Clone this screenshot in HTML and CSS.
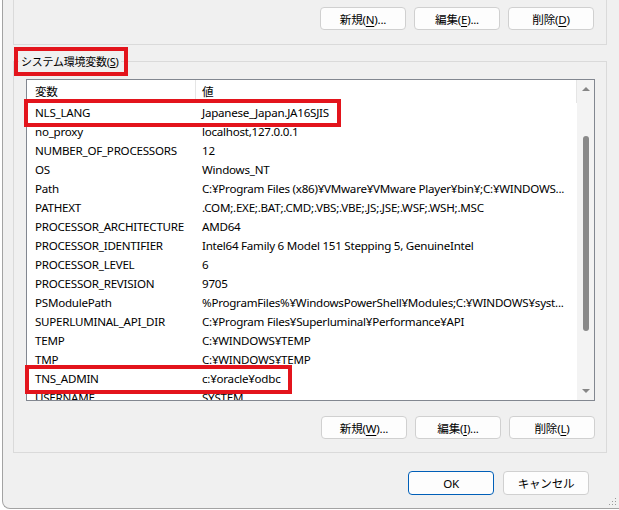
FILE: index.html
```html
<!DOCTYPE html>
<html lang="ja">

<head>
  <meta charset="UTF-8" />
  <meta name="viewport" content="width=device-width, initial-scale=1.0" />
  <title>環境変数</title>
  <link rel="stylesheet" href="styles.css">
</head>

<body>

  <div class="dialog">

    <!-- user variables (cut off at top) -->
    <div class="group group-top">
      <div class="btn-row">
        <button class="btn">新規(<u>N</u>)...</button>
        <button class="btn">編集(<u>E</u>)...</button>
        <button class="btn">削除(<u>D</u>)</button>
      </div>
    </div>

    <!-- system variables -->
    <div class="group group-sys">
      <div class="group-title">システム環境変数(<u>S</u>)</div>

      <div class="list">
        <div class="list-body">
          <div class="list-head">
            <div class="col-name">変数</div>
            <div class="col-value">値</div>
          </div>
          <div class="row"><div class="col-name">NLS_LANG</div><div class="col-value">Japanese_Japan.JA16SJIS</div></div>
          <div class="row"><div class="col-name">no_proxy</div><div class="col-value">localhost,127.0.0.1</div></div>
          <div class="row"><div class="col-name">NUMBER_OF_PROCESSORS</div><div class="col-value">12</div></div>
          <div class="row"><div class="col-name">OS</div><div class="col-value">Windows_NT</div></div>
          <div class="row"><div class="col-name">Path</div><div class="col-value">C:¥Program Files (x86)¥VMware¥VMware Player¥bin¥;C:¥WINDOWS...</div></div>
          <div class="row"><div class="col-name">PATHEXT</div><div class="col-value">.COM;.EXE;.BAT;.CMD;.VBS;.VBE;.JS;.JSE;.WSF;.WSH;.MSC</div></div>
          <div class="row"><div class="col-name">PROCESSOR_ARCHITECTURE</div><div class="col-value">AMD64</div></div>
          <div class="row"><div class="col-name">PROCESSOR_IDENTIFIER</div><div class="col-value">Intel64 Family 6 Model 151 Stepping 5, GenuineIntel</div></div>
          <div class="row"><div class="col-name">PROCESSOR_LEVEL</div><div class="col-value">6</div></div>
          <div class="row"><div class="col-name">PROCESSOR_REVISION</div><div class="col-value">9705</div></div>
          <div class="row"><div class="col-name">PSModulePath</div><div class="col-value">%ProgramFiles%¥WindowsPowerShell¥Modules;C:¥WINDOWS¥syst...</div></div>
          <div class="row"><div class="col-name">SUPERLUMINAL_API_DIR</div><div class="col-value">C:¥Program Files¥Superluminal¥Performance¥API</div></div>
          <div class="row"><div class="col-name">TEMP</div><div class="col-value">C:¥WINDOWS¥TEMP</div></div>
          <div class="row"><div class="col-name">TMP</div><div class="col-value">C:¥WINDOWS¥TEMP</div></div>
          <div class="row"><div class="col-name">TNS_ADMIN</div><div class="col-value">c:¥oracle¥odbc</div></div>
          <div class="row"><div class="col-name">USERNAME</div><div class="col-value">SYSTEM</div></div>
        </div>

        <div class="scrollbar">
          <span class="arrow-up"></span>
          <span class="thumb"></span>
          <span class="arrow-down"></span>
        </div>
      </div>

      <div class="btn-row btn-row-sys">
        <button class="btn">新規(<u>W</u>)...</button>
        <button class="btn">編集(<u>I</u>)...</button>
        <button class="btn">削除(<u>L</u>)</button>
      </div>
    </div>

    <div class="footer">
      <button class="btn btn-ok">OK</button>
      <button class="btn">キャンセル</button>
    </div>

    <svg class="grip" width="10" height="10" viewBox="0 0 10 10">
      <rect x="8" y="2" width="1" height="1" />
      <rect x="5" y="5" width="1" height="1" />
      <rect x="8" y="5" width="1" height="1" />
      <rect x="2" y="8" width="1" height="1" />
      <rect x="5" y="8" width="1" height="1" />
      <rect x="8" y="8" width="1" height="1" />
    </svg>
  </div>

  <!-- red highlight marks -->
  <div class="mark mark-title"></div>
  <div class="mark mark-nls"></div>
  <div class="mark mark-tns"></div>

</body>

</html>
```

FILE: styles.css
```css
* {
  margin: 0;
  padding: 0;
  box-sizing: border-box;
}

body {
  position: relative;
  width: 619px;
  height: 510px;
  overflow: hidden;
  background-color: #ffffff;
  font-family: "Noto Sans", "Noto Sans CJK JP", sans-serif;
  font-size: 11.6px;
  letter-spacing: -0.25px;
  color: #000;
}

/* dialog window */
.dialog {
  margin-left: 2px;
  width: 617px;
  height: 509px;
  padding-left: 10px;
  background-color: #f0f0f0;
  border-left: 1px solid #a3a3a3;
  border-bottom: 1px solid #a3a3a3;
  border-bottom-left-radius: 8px;
}

.group {
  width: 594px;
  border: 1px solid #dadada;
}

.group-top {
  height: 45px;
  border-top: none;
  padding: 7px 12px 0 0;
}

.btn-row {
  display: flex;
  justify-content: flex-end;
  gap: 8px;
}

.btn {
  width: 86px;
  height: 23px;
  background-color: #fdfdfd;
  border: 1px solid #d0d0d0;
  border-radius: 4px;
  font-family: inherit;
  font-size: 11.6px;
  letter-spacing: -0.25px;
  color: #000;
}

.btn u {
  text-underline-offset: 2px;
}

/* system variables group */
.group-sys {
  margin-top: 16px;
  height: 392px;
  padding: 0 11px 0 12px;
}

.group-title {
  width: fit-content;
  height: 17px;
  margin: -9px 0 0 -7px;
  padding: 0 2px;
  font-size: 11px;
  line-height: 17px;
  background-color: #f0f0f0;
}

.list {
  display: flex;
  width: 569px;
  height: 322px;
  margin-top: 9px;
  background-color: #fff;
  border: 1px solid #828790;
}

.list-body {
  width: 550px;
  overflow: hidden;
}

.list-head {
  display: grid;
  grid-template-columns: 169px 381px;
  height: 23px;
  line-height: 23px;
}

.list-head div {
  border-right: 1px solid #e5e5e5;
}

.row {
  display: grid;
  grid-template-columns: 169px 1fr;
  height: 19px;
  line-height: 19px;
  white-space: nowrap;
}

.col-name {
  padding-left: 8px;
  overflow: hidden;
}

.col-value {
  padding-left: 6px;
  overflow: hidden;
}

/* scrollbar */
.scrollbar {
  display: flex;
  flex-direction: column;
  align-items: center;
  width: 17px;
  padding: 7px 0;
  background-color: #f3f3f3;
}

.arrow-up {
  border-left: 4px solid transparent;
  border-right: 4px solid transparent;
  border-bottom: 4px solid #868686;
}

.thumb {
  width: 6px;
  height: 195px;
  margin-top: 45px;
  background-color: #8a8a8a;
  border-radius: 3px;
}

.arrow-down {
  margin-top: auto;
  border-left: 4px solid transparent;
  border-right: 4px solid transparent;
  border-top: 4px solid #868686;
}

.btn-row-sys {
  margin-top: 15px;
}

/* OK / cancel */
.footer {
  display: flex;
  justify-content: flex-end;
  gap: 9px;
  width: 594px;
  margin-top: 18px;
  padding-right: 18px;
}

.footer .btn {
  height: 24px;
}

.btn-ok {
  border-color: #005fb8;
}

.grip {
  position: absolute;
  left: 607px;
  top: 496px;
  fill: #9a9a9a;
}

/* annotation boxes */
.mark {
  position: absolute;
  border: 4px solid #e3141c;
}

.mark-title {
  left: 14px;
  top: 47px;
  width: 114px;
  height: 29px;
}

.mark-nls {
  left: 24px;
  top: 99px;
  width: 317px;
  height: 28px;
}

.mark-tns {
  left: 25px;
  top: 365px;
  width: 267px;
  height: 29px;
}
```
